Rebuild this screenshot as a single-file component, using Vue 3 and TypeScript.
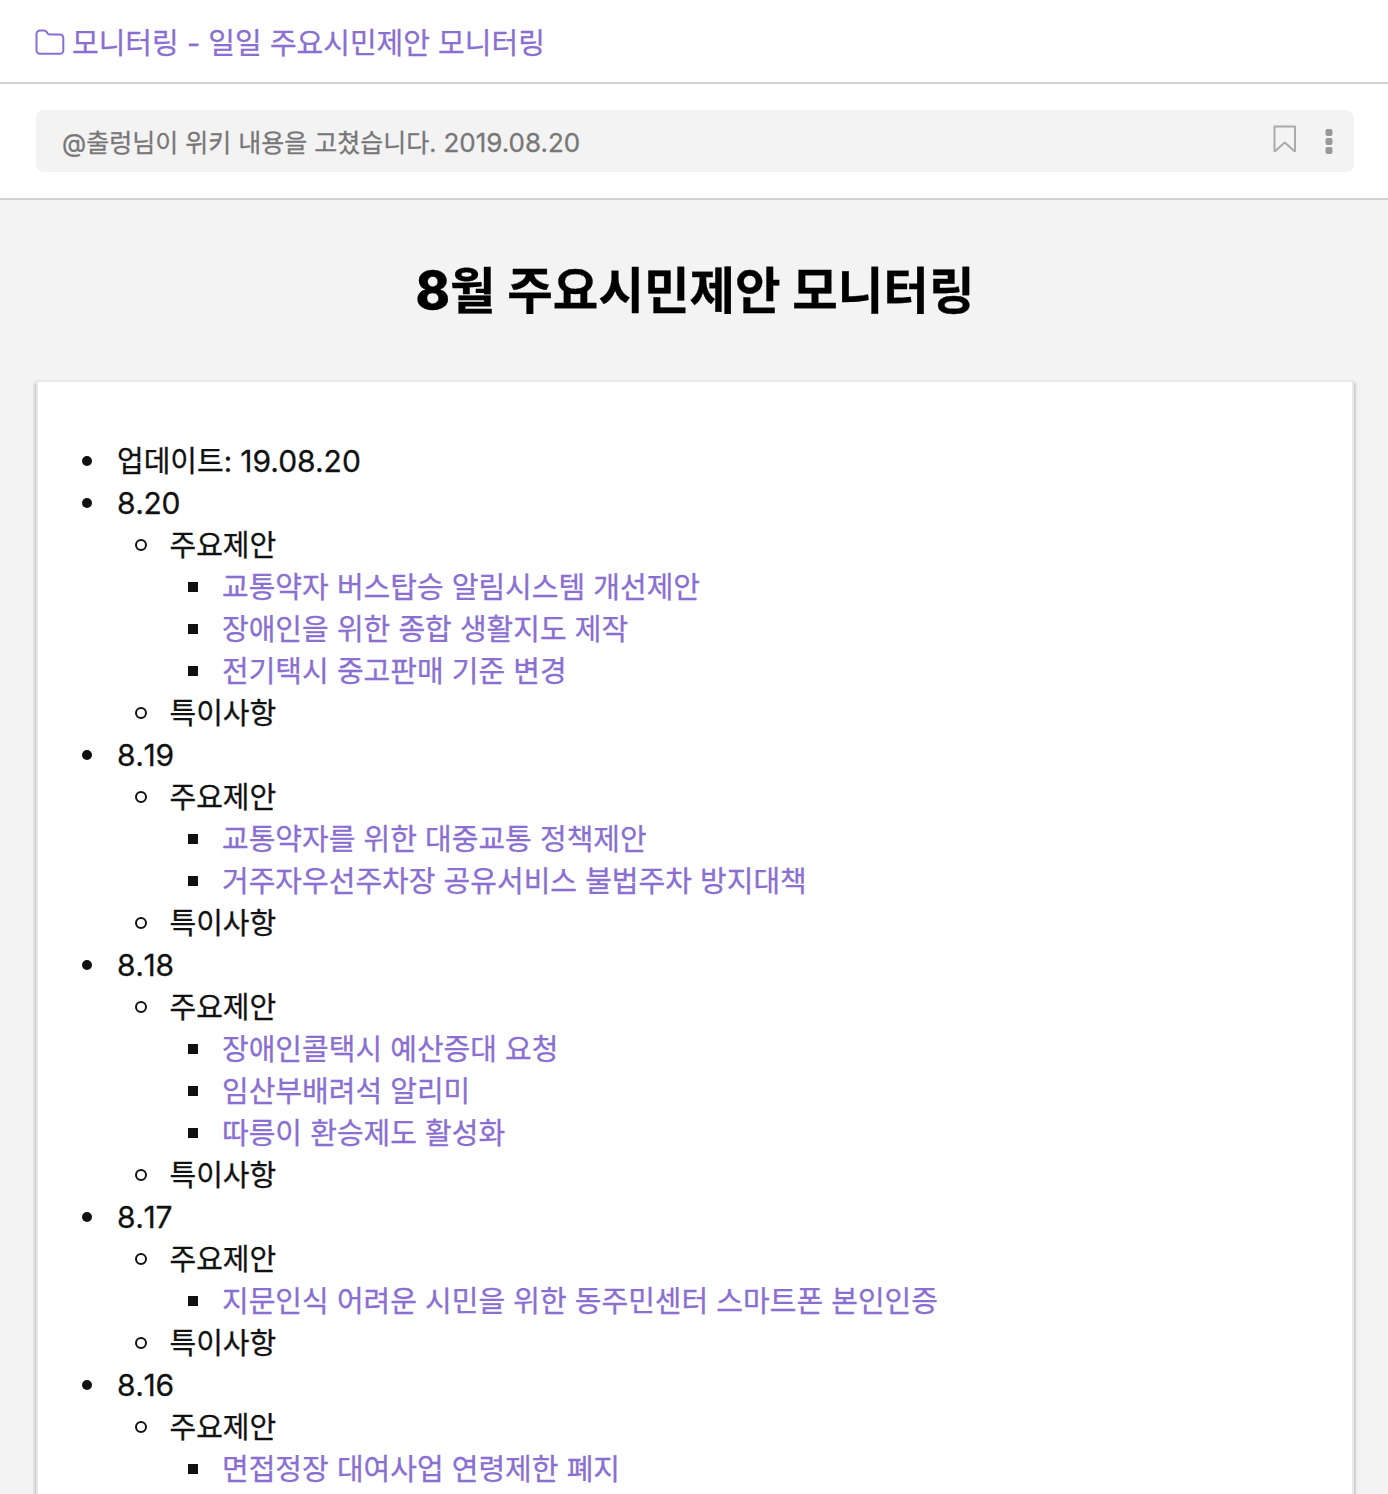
<script setup lang="ts">
interface Day { date: string; items: string[]; open?: boolean }

const days: Day[] = [
  { date: '8.20', items: ['교통약자 버스탑승 알림시스템 개선제안', '장애인을 위한 종합 생활지도 제작', '전기택시 중고판매 기준 변경'] },
  { date: '8.19', items: ['교통약자를 위한 대중교통 정책제안', '거주자우선주차장 공유서비스 불법주차 방지대책'] },
  { date: '8.18', items: ['장애인콜택시 예산증대 요청', '임산부배려석 알리미', '따릉이 환승제도 활성화'] },
  { date: '8.17', items: ['지문인식 어려운 시민을 위한 동주민센터 스마트폰 본인인증'] },
  { date: '8.16', items: ['면접정장 대여사업 연령제한 폐지'], open: true },
]
</script>

<template>
  <div class="page">
    <header class="crumb">
      <svg class="folder" width="30" height="26" viewBox="0 0 30 26" fill="none" stroke="currentColor" stroke-width="2">
        <path d="M1.500 5a3.500 3.500 0 0 1 3.500-3.500h4a3 3 0 0 1 2.400 1.200l1 1.500a3 3 0 0 0 2.300 1.300H25a3.300 3.300 0 0 1 3.300 3.300V21.500a3.300 3.300 0 0 1-3.300 3.300H5a3.500 3.500 0 0 1-3.500-3.500z" />
      </svg>
      <a class="crumb-text">모니터링 - 일일 주요시민제안 모니터링</a>
    </header>
    <section class="notice-row">
      <div class="notice">
        <span class="notice-text">@출렁님이 위키 내용을 고쳤습니다. <span class="stamp">2019.08.20</span></span>
        <svg class="bookmark" width="24" height="28" viewBox="0 0 24 28" fill="none" stroke="currentColor" stroke-width="2" stroke-linejoin="round">
          <path d="M1.500 1.500h20.500v24.500h-.8L11.750 17.500 2.300 26h-.8z" />
        </svg>
        <svg class="more" width="8" height="26" viewBox="0 0 8 26" fill="currentColor">
          <rect x=".5" width="7" height="7" rx="2" /><rect x=".5" y="9" width="7" height="7" rx="2" /><rect x=".5" y="18" width="7" height="7" rx="2" />
        </svg>
      </div>
    </section>
    <main class="wiki">
      <h1><span class="num">8</span>월 주요시민제안 모니터링</h1>
      <article class="paper">
        <ul class="l1">
          <li><div class="line"><span class="label">업데이트: <span class="stamp">19.08.20</span></span></div></li>
          <li v-for="day in days" :key="day.date">
            <div class="line"><span class="date">{{ day.date }}</span></div>
            <ul class="l2">
              <li>
                <div class="line"><span class="label">주요제안</span></div>
                <ul class="l3">
                  <li v-for="item in day.items" :key="item"><div class="line"><a class="label">{{ item }}</a></div></li>
                </ul>
              </li>
              <li v-if="!day.open"><div class="line"><span class="label">특이사항</span></div></li>
            </ul>
          </li>
        </ul>
      </article>
    </main>
  </div>
</template>

<style>
body { margin: 0; background: #f3f3f3; }
</style>

<style scoped>
.page { height: 1494px; overflow: hidden; display: flex; flex-direction: column; font-family: Inter, "Noto Sans CJK KR", sans-serif; color: #111; background: #f3f3f3; -webkit-text-stroke: .3px currentColor; }
.crumb { box-sizing: border-box; height: 84px; flex: none; display: flex; align-items: center; padding: 0 0 1px 35px; gap: 7px; border-bottom: 2px solid #d2d2d2; background: #fff; color: #8a6fd1; }
.folder { margin-top: 2px; }
.crumb-text { font-size: 29px; white-space: nowrap; }
.notice-row { box-sizing: border-box; height: 116px; flex: none; padding: 26px 34px 0 36px; border-bottom: 2px solid #d2d2d2; background: #fff; }
.notice { box-sizing: border-box; height: 62px; display: flex; align-items: center; padding: 0 21px 0 26px; border-radius: 8px; background: #f3f3f3; color: #777; }
.notice-text { flex: 1; font-size: 25px; white-space: nowrap; }
.notice .stamp { font-size: 26px; }
.bookmark { margin: -5px 28px 0 0; color: #aaa; }
.more { margin-top: 2px; color: #999; }
.wiki { flex: 1; display: flex; flex-direction: column; padding: 0 36px 0 38px; }
h1 { margin: 0; height: 182px; line-height: 182px; text-align: center; font-size: 49.500px; font-weight: 700; color: #000; white-space: nowrap; }
.num { font-size: 52px; font-weight: 800; line-height: 1; }
.paper { flex: 1; background: #fff; padding-top: 58px; box-shadow: 0 0 0 2px #e8e8e8, 0 3px 4px 2px rgba(0, 0, 0, .4); }
ul { margin: 0; padding: 0; list-style: none; }
.l1 { padding-left: 78.500px; }
.l2, .l3 { padding-left: 52.500px; }
.line { height: 42px; line-height: 42px; display: flex; align-items: center; white-space: nowrap; font-size: 29px; }
.label { padding-top: 2px; }
.line .stamp, .date { font-size: 30px; line-height: 1; }
.date { font-kerning: none; letter-spacing: -.3px; }
.line::before { content: ""; box-sizing: border-box; flex: none; width: 10px; height: 10px; margin: 0 25px 0 -34.500px; border-radius: 50%; background: #111; }
.l2 .line::before { width: 12px; height: 12px; margin: 0 23px 0 -34.500px; border: 2px solid #111; background: none; }
.l3 .line::before { width: 10px; height: 10px; margin: 0 24.500px 0 -34px; border: 0; border-radius: 0; background: #111; }
.line a { color: #8a6fd1; }
</style>
